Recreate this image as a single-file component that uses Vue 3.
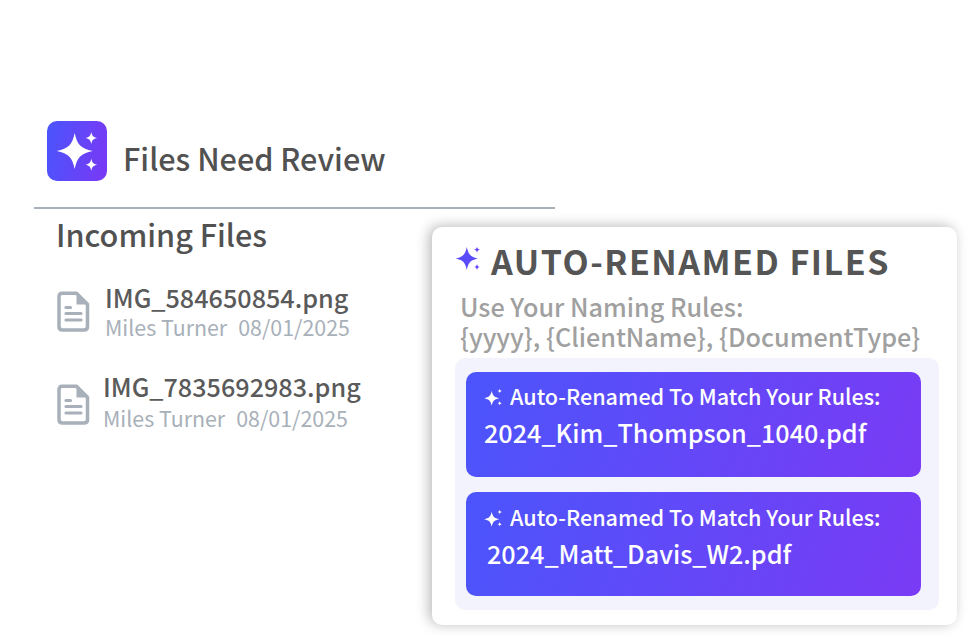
<script setup>
const incoming = [
  { name: 'IMG_584650854.png', who: 'Miles Turner', date: '08/01/2025', shift: false },
  { name: 'IMG_7835692983.png', who: 'Miles Turner', date: '08/01/2025', shift: true },
]
const renamed = [
  { name: '2024_Kim_Thompson_1040.pdf', shift: false },
  { name: '2024_Matt_Davis_W2.pdf', shift: true },
]
const star = 'M0-1C.14-.34.34-.14 1 0 .34.14.14.34 0 1-.14.34-.34.14-1 0-.34-.14-.14-.34 0-1Z'
</script>

<template>
  <div class="page">
    <section class="left">
      <header class="head">
        <div class="logo">
          <svg width="60" height="60" viewBox="0 0 60 60">
            <path :d="star" transform="translate(27.700 30) scale(18)" fill="#fff" />
            <path :d="star" transform="translate(44.300 17) scale(6)" fill="#fff" />
            <path :d="star" transform="translate(44.300 43.700) scale(6)" fill="#fff" />
          </svg>
        </div>
        <h1 class="title">Files Need Review</h1>
      </header>
      <div class="divider"></div>
      <h2 class="sub">Incoming Files</h2>
      <ul class="files">
        <li v-for="f in incoming" :key="f.name" class="file" :class="{ shifted: f.shift }">
          <svg class="doc" width="34" height="42" viewBox="0 0 34 42">
            <path d="M6 2.200H20.500L31.500 13.200V35.500Q31.500 39 28 39H6.500Q3 39 3 35.500V5.700Q3 2.200 6 2.200Z" fill="none" stroke="#a8b0b9" stroke-width="3.500" stroke-linejoin="round" />
            <path d="M20.500 3V13.500H31Z" fill="#a8b0b9" />
            <path d="M10 16.500H14.500M10 22.500H25M10 29H25" stroke="#a8b0b9" stroke-width="3.200" stroke-linecap="round" />
          </svg>
          <div class="meta">
            <div class="fname">{{ f.name }}</div>
            <div class="fsub"><span>{{ f.who }}</span><span>{{ f.date }}</span></div>
          </div>
        </li>
      </ul>
    </section>

    <section class="card">
      <div class="card-head">
        <svg width="26" height="26" viewBox="0 0 26 26">
          <path :d="star" transform="translate(11.800 11.500) scale(11 11.500)" fill="#5a4cf8" />
          <path :d="star" transform="translate(22 2.700) scale(3)" fill="#6a45f6" />
          <path :d="star" transform="translate(22 20) scale(3)" fill="#6a45f6" />
        </svg>
        <h2 class="card-title">AUTO-RENAMED FILES</h2>
      </div>
      <p class="rules">Use Your Naming Rules:<br />{yyyy}, {ClientName}, {DocumentType}</p>
      <div class="panel">
        <article v-for="r in renamed" :key="r.name" class="item">
          <div class="item-top">
            <svg width="18" height="18" viewBox="0 0 18 18">
              <path :d="star" transform="translate(7.700 10.300) scale(7.500)" fill="#fff" />
              <path :d="star" transform="translate(15.700 3) scale(2.300)" fill="#fff" />
              <path :d="star" transform="translate(15.700 15.300) scale(2.300)" fill="#fff" />
            </svg>
            <span>Auto-Renamed To Match Your Rules:</span>
          </div>
          <div class="item-name" :class="{ nudged: r.shift }">{{ r.name }}</div>
        </article>
      </div>
    </section>
  </div>
</template>

<style scoped>
.page {
  position: relative;
  width: 972px;
  height: 640px;
  overflow: hidden;
  background: #fff;
  font-family: "Noto Sans CJK SC", "Noto Sans", sans-serif;
  opacity: 0.999;
}
.left {
  width: 521px;
  margin-left: 34px;
  padding-top: 121px;
}
.head {
  display: flex;
  align-items: flex-end;
  height: 60px;
  padding-left: 13px;
  gap: 16px;
}
.logo {
  flex: none;
  width: 60px;
  height: 60px;
  border-radius: 10px;
  background: linear-gradient(100deg, #4a55fc, #7a38f5);
}
.logo svg { display: block; }
.title {
  margin: 0 0 4px;
  font-size: 30.600px;
  line-height: 38px;
  font-weight: 500;
  color: #515151;
}
.divider {
  height: 2px;
  margin-top: 26px;
  background: #a8b0b9;
}
.sub {
  margin: 6px 0 0 22px;
  font-size: 30.600px;
  line-height: 38px;
  font-weight: 500;
  color: #515151;
}
.files {
  list-style: none;
  margin: 27px 0 0 22px;
  padding: 0;
}
.file {
  display: flex;
  align-items: flex-start;
  height: 62px;
  margin-bottom: 27px;
}
.doc {
  flex: none;
  margin: 11px 1px 0 0;
}
.file.shifted .doc { margin-top: 15px; }
.meta {
  margin: 2px 0 0 14px;
}
.file.shifted .meta { margin-left: 12px; }
.fname {
  font-size: 25.200px;
  line-height: 31px;
  font-weight: 500;
  color: #5a5a5a;
}
.fsub {
  display: flex;
  gap: 11px;
  margin-top: 1px;
  font-size: 21.400px;
  line-height: 26px;
  color: #a8b0b9;
}
.file.shifted .fsub { margin-top: 3px; }
.card {
  position: absolute;
  left: 432px;
  top: 227px;
  width: 525px;
  height: 398px;
  box-sizing: border-box;
  padding: 13px 18px 15px 23px;
  background: #fff;
  border-radius: 10px;
  box-shadow: -3px -1px 13px rgba(0, 0, 0, 0.28);
}
.card-head {
  display: flex;
  align-items: center;
  gap: 10px;
}
.card-head svg { flex: none; margin-bottom: 3px; }
.card-title {
  margin: 0;
  font-size: 34px;
  line-height: 42px;
  font-weight: 700;
  letter-spacing: 1.500px;
  color: #555;
}
.rules {
  margin: 9px 0 0 5px;
  font-size: 25.200px;
  line-height: 30px;
  font-weight: 500;
  color: #a0a0a0;
}
.panel {
  margin-top: 7px;
  padding: 14px 18px 14px 11px;
  background: #f3f3fd;
  border-radius: 10px;
  display: flex;
  flex-direction: column;
  gap: 15px;
}
.item {
  height: 104.500px;
  box-sizing: border-box;
  padding: 9px 18px 0 18px;
  border-radius: 10px;
  background: linear-gradient(110deg, #4b55fb, #7a3bf5);
  color: #fff;
}
.item:last-child { padding-top: 10px; }
.item-top {
  display: flex;
  align-items: center;
  gap: 8px;
  font-size: 21.600px;
  line-height: 30px;
  font-weight: 500;
  white-space: nowrap;
}
.item-top svg { flex: none; margin-top: 2px; }
.item-name {
  margin-top: 4px;
  font-size: 25.200px;
  line-height: 34px;
  font-weight: 500;
  white-space: nowrap;
}
.item-name.nudged { margin-left: 3px; }
</style>
